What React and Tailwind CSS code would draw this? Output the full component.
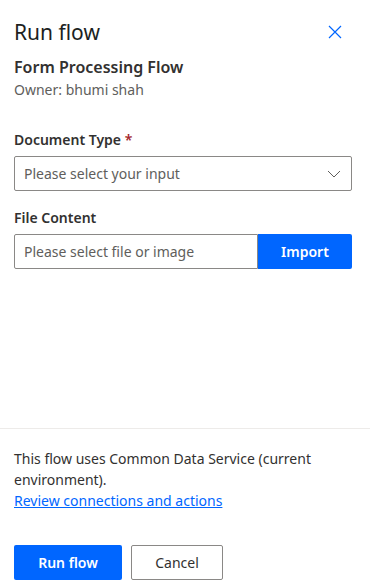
import React from "react";

export default function App() {
  return (
    <div className="w-[370px] h-[588px] flex flex-col bg-white text-[#323130]" style={{ fontFamily: '"Noto Sans", "Open Sans", sans-serif' }}>
      <div className="flex-1 pl-[14px] pr-[18px]">
        <div className="flex items-center justify-between pt-[16px]">
          <h1 className="text-[21px] leading-[30px] text-[#201f1e] font-normal">Run flow</h1>
          <button className="w-[32px] h-[32px] flex items-center justify-center mr-[1px] text-[#0066ff]">
            <svg width="14" height="14" viewBox="0 0 14 14" fill="none" stroke="currentColor" strokeWidth="1.2">
              <path d="M1 1 L13 13 M13 1 L1 13" />
            </svg>
          </button>
        </div>
        <div className="mt-[8px] text-[16px] leading-[22px] font-semibold text-[#323130]">Form Processing Flow</div>
        <div className="mt-[2px] text-[14px] leading-[20px] text-[#605e5c]">Owner: bhumi shah</div>

        <div className="mt-[30px] text-[14px] leading-[20px] font-semibold text-[#323130]">
          Document Type <span className="text-[#a4262c]">*</span>
        </div>
        <div className="mt-[6px] h-[35px] border border-[#8a8886] rounded-[2px] flex items-center justify-between pl-[9px] pr-[10px]">
          <span className="text-[14px] text-[#605e5c]">Please select your input</span>
          <svg width="14" height="8" viewBox="0 0 14 8" fill="none" stroke="#605e5c" strokeWidth="1">
            <path d="M1 1 L7 7 L13 1" />
          </svg>
        </div>

        <div className="mt-[17px] text-[14px] leading-[20px] font-semibold text-[#323130]">File Content</div>
        <div className="mt-[6px] flex h-[35px]">
          <div className="flex-1 border border-[#8a8886] rounded-l-[2px] flex items-center pl-[9px]">
            <span className="text-[14px] text-[#605e5c]">Please select file or image</span>
          </div>
          <button className="w-[94px] bg-[#0066ff] rounded-r-[2px] text-white text-[14px] font-semibold">Import</button>
        </div>
      </div>

      <div className="border-t border-[#edebe9] pl-[14px] pr-[18px] pt-[19px] pb-[8px]">
        <p className="text-[14px] leading-[21px] text-[#323130]">This flow uses Common Data Service (current environment).</p>
        <a href="#" className="block text-[14px] leading-[21px] text-[#0066ff] underline">Review connections and actions</a>
        <div className="mt-[34px] flex gap-[9px]">
          <button className="w-[108px] h-[35px] bg-[#0066ff] rounded-[2px] text-white text-[14px] font-semibold">Run flow</button>
          <button className="w-[92px] h-[35px] border border-[#8a8886] rounded-[2px] text-[#323130] text-[14px]">Cancel</button>
        </div>
      </div>
    </div>
  );
}
